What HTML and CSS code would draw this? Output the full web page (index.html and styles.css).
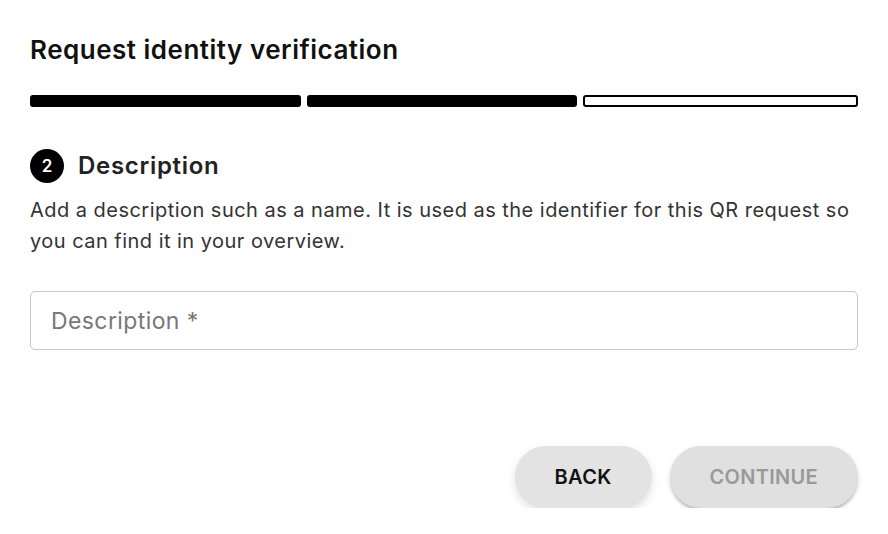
FILE: index.html
```html
<!DOCTYPE html>
<html lang="en">
<head>
<meta charset="utf-8">
<title>Request identity verification</title>
<link rel="stylesheet" href="styles.css">
</head>
<body>
<main class="page">
  <h1 class="title">Request identity verification</h1>
  <div class="progress">
    <span class="seg seg-done"></span>
    <span class="seg seg-done"></span>
    <span class="seg seg-todo"></span>
  </div>
  <div class="step-head">
    <span class="step-num">2</span>
    <h2 class="step-title">Description</h2>
  </div>
  <p class="step-text">Add a description such as a name. It is used as the identifier for this QR request so you can find it in your overview.</p>
  <input class="field" type="text" placeholder="Description *">
  <div class="actions">
    <button class="btn btn-back" type="button">Back</button>
    <button class="btn btn-continue" type="button" disabled>Continue</button>
  </div>
</main>
</body>
</html>
```
FILE: styles.css
```css
* { box-sizing: border-box; }
html, body { margin: 0; background: #fff; }
body {
  font-family: Inter, "Noto Sans", "Liberation Sans", sans-serif;
  color: #111;
}
.page {
  padding: 34px 30px 0 30px;
  display: flex;
  flex-direction: column;
}
.title {
  margin: 0;
  font-size: 26px;
  line-height: 32px;
  font-weight: 600;
  letter-spacing: 0.5px;
  color: #111;
}
.progress {
  margin-top: 29px;
  display: flex;
  gap: 6px;
}
.seg {
  flex: 1;
  height: 12px;
  border-radius: 3px;
}
.seg-done { background: #000; }
.seg-todo { border: 2px solid #000; background: #fff; }
.step-head {
  margin-top: 42px;
  display: flex;
  align-items: center;
  gap: 14px;
  height: 34px;
}
.step-num {
  width: 34px;
  height: 34px;
  border-radius: 50%;
  background: #000;
  color: #fff;
  font-size: 17px;
  font-weight: 600;
  display: flex;
  align-items: center;
  justify-content: center;
}
.step-title {
  margin: 0;
  font-size: 24px;
  font-weight: 600;
  line-height: 32px;
  letter-spacing: 0.7px;
  color: #222;
}
.step-text {
  margin: 12px 0 0 0;
  font-size: 20px;
  line-height: 31px;
  letter-spacing: 0.47px;
  color: #333;
}
.field {
  margin-top: 34px;
  height: 59px;
  width: 100%;
  border: 1px solid #c8c8c8;
  border-radius: 5px;
  padding: 0 20px;
  font-family: inherit;
  font-size: 23px;
  letter-spacing: 0.4px;
  color: #222;
  background: #fff;
  outline: none;
}
.field::placeholder { color: #777; }
.actions {
  margin-top: 96px;
  display: flex;
  justify-content: flex-end;
  gap: 18px;
}
.btn {
  height: 62px;
  padding: 0 40px;
  border: none;
  border-radius: 31px;
  background: #e3e3e3;
  font-family: inherit;
  font-size: 20px;
  font-weight: 600;
  text-transform: uppercase;
  letter-spacing: 0.3px;
  cursor: pointer;
}
.btn-back {
  color: #111;
  box-shadow: 0 4px 10px rgba(0,0,0,0.12);
}
.btn-continue {
  color: #999;
  background: #e0e0e0;
  box-shadow: 0 3px 3px -1px rgba(0,0,0,0.25), 0 2px 6px rgba(0,0,0,0.1);
}
```
